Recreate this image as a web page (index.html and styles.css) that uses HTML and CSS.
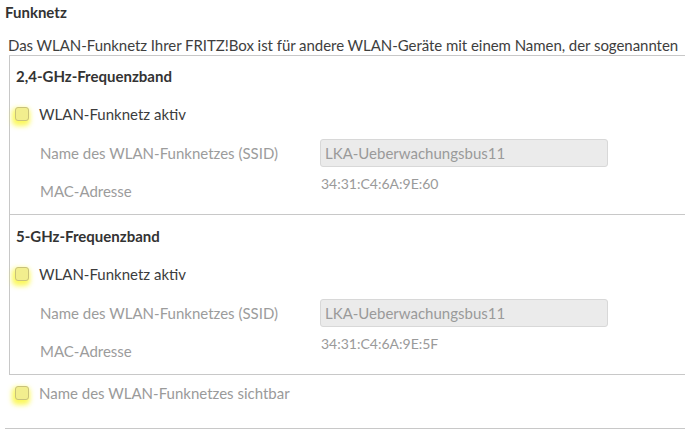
FILE: index.html
```html
<!DOCTYPE html>
<html lang="de">
<head>
<meta charset="utf-8">
<title>Funknetz</title>
<link rel="stylesheet" href="styles.css">
</head>
<body>
<div class="page">
  <h2 class="title">Funknetz</h2>
  <p class="desc">Das WLAN-Funknetz Ihrer FRITZ!Box ist für andere WLAN-Geräte mit einem Namen, der sogenannten</p>
  <div class="box">
    <div class="band">
      <h3 class="band-title">2,4-GHz-Frequenzband</h3>
      <label class="check-row"><span class="cb"></span><span class="cb-label">WLAN-Funknetz aktiv</span></label>
      <div class="field ssid">
        <span class="flabel">Name des WLAN-Funknetzes (SSID)</span>
        <span class="input">LKA-Ueberwachungsbus11</span>
      </div>
      <div class="field mac">
        <span class="flabel">MAC-Adresse</span>
        <span class="fvalue">34:31:C4:6A:9E:60</span>
      </div>
    </div>
    <div class="band second">
      <h3 class="band-title">5-GHz-Frequenzband</h3>
      <label class="check-row"><span class="cb"></span><span class="cb-label">WLAN-Funknetz aktiv</span></label>
      <div class="field ssid">
        <span class="flabel">Name des WLAN-Funknetzes (SSID)</span>
        <span class="input">LKA-Ueberwachungsbus11</span>
      </div>
      <div class="field mac">
        <span class="flabel">MAC-Adresse</span>
        <span class="fvalue">34:31:C4:6A:9E:5F</span>
      </div>
    </div>
  </div>
  <label class="check-row outer"><span class="cb"></span><span class="cb-label muted">Name des WLAN-Funknetzes sichtbar</span></label>
  <div class="bottom-line"></div>
</div>
</body>
</html>
```
FILE: styles.css
```css
html, body {
  margin: 0;
  padding: 0;
  background: #ffffff;
  overflow: hidden;
}
body {
  font-family: "Lato", "Open Sans", sans-serif;
  color: #3c3c3c;
  width: 685px;
  height: 436px;
}
.page {
  width: 685px;
}
.title {
  margin: 0;
  padding: 2px 0 0 5px;
  font-size: 15px;
  font-weight: 700;
  line-height: 20px;
  color: #333;
}
.desc {
  margin: 13px 0 0 8px;
  font-size: 15px;
  line-height: 20px;
  white-space: nowrap;
  letter-spacing: -0.05px;
  color: #3e3e3e;
}
.box {
  margin: 0 0 0 9px;
  border: 1px solid #c8c8c8;
  border-right: none;
}
.band {
  padding: 9px 0 12px 6px;
}
.band.second {
  border-top: 1px solid #c8c8c8;
  padding-top: 10px;
}
.band-title {
  margin: 0;
  font-size: 15px;
  font-weight: 700;
  line-height: 22px;
  color: #333;
}
.check-row {
  display: flex;
  align-items: center;
  gap: 10px;
  height: 24px;
  margin-top: 15px;
}
.band .check-row {
  margin-left: -1px;
}
.check-row.outer {
  margin: 6px 0 0 15px;
}
.cb {
  width: 12px;
  height: 12px;
  border: 1px solid #c9c27a;
  border-radius: 3px;
  background: #f2ee8e;
  box-shadow: -1px 3px 5px 2px rgba(250, 245, 40, 0.75);
}
.cb-label {
  font-size: 15px;
  color: #3c3c3c;
}
.cb-label.muted {
  color: #9a9a9a;
}
.field {
  display: grid;
  grid-template-columns: 280px auto;
  padding-left: 24px;
  font-size: 15px;
}
.ssid {
  margin-top: 13px;
  align-items: center;
  height: 28px;
}
.flabel {
  color: #9c9c9c;
}
.input {
  box-sizing: border-box;
  width: 288px;
  height: 28px;
  padding: 0 4px;
  line-height: 26px;
  background: #ebebeb;
  border: 1px solid #d8d8d8;
  border-radius: 3px;
  color: #9a9a9a;
}
.mac {
  margin-top: 6px;
  align-items: start;
}
.mac .flabel {
  padding-top: 7px;
  line-height: 22px;
}
.fvalue {
  padding-left: 1px;
  line-height: 22px;
  font-size: 14px;
  color: #9a9a9a;
}
.bottom-line {
  margin: 23px 0 0 5px;
  border-top: 1px solid #c8c8c8;
}
```
